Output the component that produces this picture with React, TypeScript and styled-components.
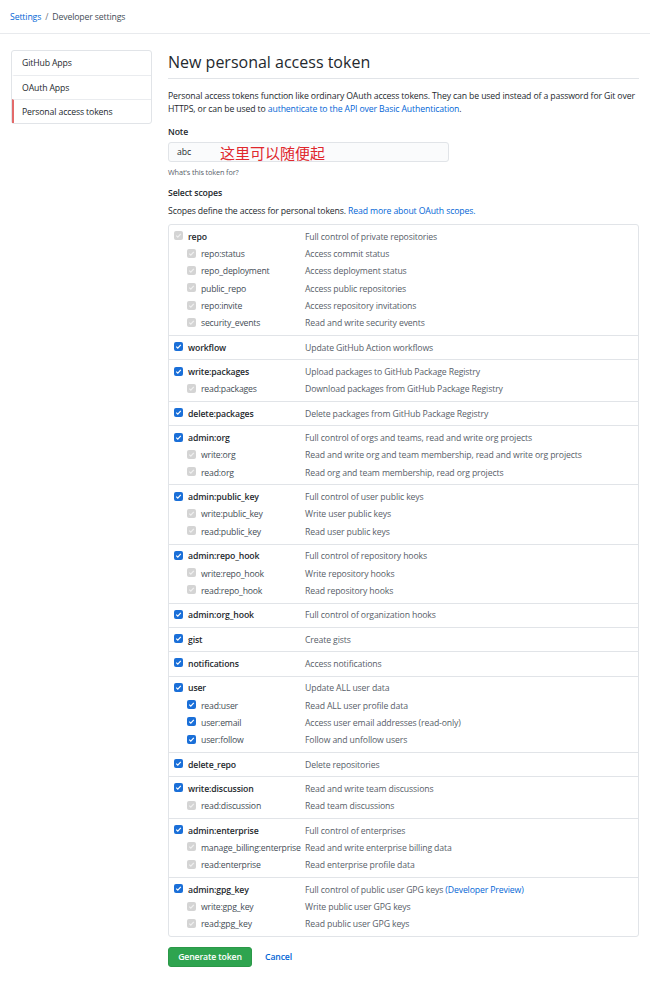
import styled, { createGlobalStyle } from 'styled-components'

const GlobalStyle = createGlobalStyle`
    body {
        margin: 0;
        background: #ffffff;
        font-family: "Open Sans", "Noto Sans", "Noto Sans CJK SC", sans-serif;
        font-size: 8.7px;
        letter-spacing: -0.13px;
        color: #24292e;
    }
`

const Header = styled.div`
    height: 33px;
    border-bottom: 1px solid #e8eaed;
    display: flex;
    align-items: center;
    padding-left: 10px;
    color: #444d56;
`
const Crumb = styled.a`
    color: #0366d6;
    text-decoration: none;
`
const Sep = styled.span`
    margin: 0 4px;
    color: #6a737d;
`
const Main = styled.div`
    display: flex;
    align-items: flex-start;
    padding: 16px 11px 0 11px;
`
const Sidebar = styled.nav`
    width: 141px;
    box-sizing: border-box;
    flex-shrink: 0;
    border: 1px solid #e1e4e8;
    border-radius: 3px;
    display: flex;
    flex-direction: column;
`
const NavItem = styled.div<{ $active?: boolean; $first?: boolean }>`
    height: 24px;
    display: flex;
    align-items: center;
    padding-left: 8px;
    border-left: 2px solid ${p => (p.$active ? '#e36a6a' : 'transparent')};
    border-top: ${p => (p.$first ? 'none' : '1px solid #eaecef')};
    box-sizing: border-box;
    color: #24292e;
`
const Content = styled.div`
    margin-left: 16px;
    padding-top: 2px;
    width: 471px;
`
const Title = styled.h1`
    margin: 0;
    font-size: 16px;
    font-weight: 400;
    letter-spacing: 0;
    line-height: 20px;
    padding-bottom: 6px;
    border-bottom: 1px solid #e1e4e8;
`
const Para = styled.p<{ $gap?: number }>`
    margin: ${p => p.$gap ?? 11}px 0 0 0;
    line-height: 13px;
    color: #24292e;
`
const Link = styled.a`
    color: #0366d6;
    text-decoration: none;
`
const Label = styled.div<{ $gap?: number }>`
    margin-top: ${p => p.$gap ?? 10}px;
    font-weight: 600;
    line-height: 13px;
`
const InputWrap = styled.div`
    position: relative;
    margin-top: 3px;
    width: 281px;
    height: 20px;
    box-sizing: border-box;
    background: #fafbfc;
    border: 1px solid #e1e4e8;
    border-radius: 3px;
    display: flex;
    align-items: center;
    padding-left: 8px;
`
const Note = styled.span`
    position: absolute;
    left: 51px;
    top: 50%;
    transform: translateY(-50%);
    color: #e0272d;
    font-size: 15px;
    letter-spacing: 0;
    font-family: "Noto Sans CJK SC", sans-serif;
    line-height: 1;
`
const Help = styled.div`
    margin-top: 5px;
    font-size: 7.3px;
    line-height: 11px;
    color: #586069;
`
const Table = styled.div`
    margin-top: 6px;
    border: 1px solid #e1e4e8;
    border-radius: 3px;
`
const Group = styled.div`
    padding: 3px 0 3px 5px;
    & + & {
        border-top: 1px solid #e1e4e8;
    }
`
const Row = styled.div<{ $sub?: boolean }>`
    display: flex;
    align-items: center;
    height: 17.35px;
    padding-left: ${p => (p.$sub ? '13px' : '0')};
`
const NameCell = styled.div<{ $sub?: boolean }>`
    display: flex;
    align-items: center;
    width: ${p => (p.$sub ? '118px' : '131px')};
    flex-shrink: 0;
    white-space: nowrap;
    letter-spacing: ${p => (p.$sub ? '-0.2px' : 'inherit')};
    font-weight: ${p => (p.$sub ? 400 : 600)};
    color: ${p => (p.$sub ? '#444d56' : '#24292e')};
`
const Desc = styled.div`
    color: #586069;
    white-space: nowrap;
`
const Box = styled.span<{ $on: boolean }>`
    width: 9px;
    height: 9px;
    flex-shrink: 0;
    border-radius: 2px;
    margin-right: 5px;
    background: ${p => (p.$on ? '#1a6fd8' : '#d4d4d4')};
    display: inline-flex;
    align-items: center;
    justify-content: center;
    margin-top: -2px;
`
const Actions = styled.div`
    display: flex;
    align-items: center;
    margin-top: 10px;
`
const Button = styled.button`
    height: 20px;
    width: 84px;
    border: 1px solid #2b9848;
    border-radius: 3px;
    background: #2ea44f;
    color: #ffffff;
    font-family: inherit;
    font-size: 8.7px;
    letter-spacing: inherit;
    font-weight: 600;
    padding: 0;
`
const Cancel = styled.a`
    margin-left: 13px;
    color: #0366d6;
    font-weight: 600;
    text-decoration: none;
`

type Scope = { name: string; desc: React.ReactNode; on?: boolean }
type ScopeGroup = { top: Scope; subs?: Scope[] }

const groups: ScopeGroup[] = [
    {
        top: { name: 'repo', desc: 'Full control of private repositories' },
        subs: [
            { name: 'repo:status', desc: 'Access commit status' },
            { name: 'repo_deployment', desc: 'Access deployment status' },
            { name: 'public_repo', desc: 'Access public repositories' },
            { name: 'repo:invite', desc: 'Access repository invitations' },
            { name: 'security_events', desc: 'Read and write security events' },
        ],
    },
    { top: { name: 'workflow', desc: 'Update GitHub Action workflows', on: true } },
    {
        top: { name: 'write:packages', desc: 'Upload packages to GitHub Package Registry', on: true },
        subs: [{ name: 'read:packages', desc: 'Download packages from GitHub Package Registry' }],
    },
    { top: { name: 'delete:packages', desc: 'Delete packages from GitHub Package Registry', on: true } },
    {
        top: { name: 'admin:org', desc: 'Full control of orgs and teams, read and write org projects', on: true },
        subs: [
            { name: 'write:org', desc: 'Read and write org and team membership, read and write org projects' },
            { name: 'read:org', desc: 'Read org and team membership, read org projects' },
        ],
    },
    {
        top: { name: 'admin:public_key', desc: 'Full control of user public keys', on: true },
        subs: [
            { name: 'write:public_key', desc: 'Write user public keys' },
            { name: 'read:public_key', desc: 'Read user public keys' },
        ],
    },
    {
        top: { name: 'admin:repo_hook', desc: 'Full control of repository hooks', on: true },
        subs: [
            { name: 'write:repo_hook', desc: 'Write repository hooks' },
            { name: 'read:repo_hook', desc: 'Read repository hooks' },
        ],
    },
    { top: { name: 'admin:org_hook', desc: 'Full control of organization hooks', on: true } },
    { top: { name: 'gist', desc: 'Create gists', on: true } },
    { top: { name: 'notifications', desc: 'Access notifications', on: true } },
    {
        top: { name: 'user', desc: 'Update ALL user data', on: true },
        subs: [
            { name: 'read:user', desc: 'Read ALL user profile data', on: true },
            { name: 'user:email', desc: 'Access user email addresses (read-only)', on: true },
            { name: 'user:follow', desc: 'Follow and unfollow users', on: true },
        ],
    },
    { top: { name: 'delete_repo', desc: 'Delete repositories', on: true } },
    {
        top: { name: 'write:discussion', desc: 'Read and write team discussions', on: true },
        subs: [{ name: 'read:discussion', desc: 'Read team discussions' }],
    },
    {
        top: { name: 'admin:enterprise', desc: 'Full control of enterprises', on: true },
        subs: [
            { name: 'manage_billing:enterprise', desc: 'Read and write enterprise billing data' },
            { name: 'read:enterprise', desc: 'Read enterprise profile data' },
        ],
    },
    {
        top: {
            name: 'admin:gpg_key',
            desc: (
                <>
                    Full control of public user GPG keys <Link href="#">(Developer Preview)</Link>
                </>
            ),
            on: true,
        },
        subs: [
            { name: 'write:gpg_key', desc: 'Write public user GPG keys' },
            { name: 'read:gpg_key', desc: 'Read public user GPG keys' },
        ],
    },
]

function Check({ on }: { on: boolean }) {
    return (
        <Box $on={on}>
            <svg width="7" height="7" viewBox="0 0 10 10">
                <path d="M1.8 5.2 L4 7.4 L8.3 2.6" fill="none" stroke={on ? '#ffffff' : '#f0f0f0'} strokeWidth="1.7" />
            </svg>
        </Box>
    )
}

function ScopeRow({ scope, sub }: { scope: Scope; sub?: boolean }) {
    return (
        <Row $sub={sub}>
            <NameCell $sub={sub}>
                <Check on={!!scope.on} />
                {scope.name}
            </NameCell>
            <Desc>{scope.desc}</Desc>
        </Row>
    )
}

export default function App() {
    return (
        <>
            <GlobalStyle />
            <Header>
                <Crumb href="#">Settings</Crumb>
                <Sep>/</Sep>
                Developer settings
            </Header>
            <Main>
                <Sidebar>
                    <NavItem $first>GitHub Apps</NavItem>
                    <NavItem>OAuth Apps</NavItem>
                    <NavItem $active>Personal access tokens</NavItem>
                </Sidebar>
                <Content>
                    <Title>New personal access token</Title>
                    <Para>
                        <span>Personal access tokens function like ordinary OAuth access tokens. They can be used instead of a password for Git over</span>
                        <br />
                        <span>HTTPS, or can be used to </span>
                        <Link href="#">authenticate to the API over Basic Authentication</Link>.
                    </Para>
                    <Label>Note</Label>
                    <InputWrap>
                        abc
                        <Note>这里可以随便起</Note>
                    </InputWrap>
                    <Help>What's this token for?</Help>
                    <Label $gap={9}>Select scopes</Label>
                    <Para $gap={5}>
                        Scopes define the access for personal tokens. <Link href="#">Read more about OAuth scopes.</Link>
                    </Para>
                    <Table>
                        {groups.map(g => (
                            <Group key={g.top.name}>
                                <ScopeRow scope={g.top} />
                                {g.subs?.map(s => <ScopeRow key={s.name} scope={s} sub />)}
                            </Group>
                        ))}
                    </Table>
                    <Actions>
                        <Button>Generate token</Button>
                        <Cancel href="#">Cancel</Cancel>
                    </Actions>
                </Content>
            </Main>
        </>
    )
}
